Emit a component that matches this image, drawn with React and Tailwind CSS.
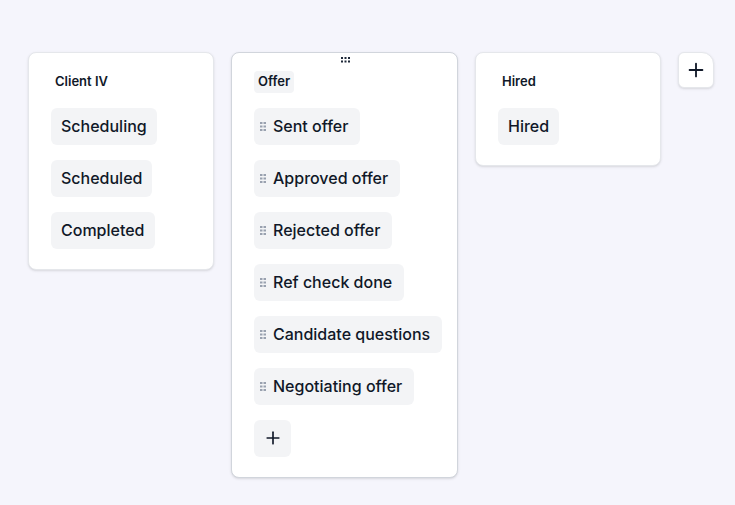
import { Plus } from "lucide-react";

function ChipHandle() {
  return (
    <svg width="6" height="9" viewBox="0 0 6 9" className="shrink-0 text-gray-400">
      {[0, 3.5, 7].map((y) =>
        [0, 3.5].map((x) => <rect key={`${x}-${y}`} x={x} y={y} width="2.5" height="2" fill="currentColor" />)
      )}
    </svg>
  );
}

function Chip({ label, handle }) {
  return (
    <div
      className={`h-[37px] inline-flex items-center rounded-md bg-gray-100 text-[16px] font-medium text-gray-900 ${
        handle ? "pl-[6px] pr-[12px] gap-[7px]" : "px-[10px]"
      }`}
    >
      {handle && <ChipHandle />}
      <span>{label}</span>
    </div>
  );
}

function Column({ title, items, width, handle, active }) {
  return (
    <div
      className={`relative bg-white rounded-lg border shadow-sm pt-[15px] pb-[20px] pl-[22px] pr-3 ${width} ${
        active ? "border-gray-300" : "border-gray-200"
      }`}
    >
      {active && (
        <svg width="9" height="6" viewBox="0 0 9 6" className="absolute top-[4px] left-[109px] text-gray-800">
          {[0, 3.5, 7].map((x) =>
            [0, 3.5].map((y) => <rect key={`${x}-${y}`} x={x} y={y} width="2" height="2" fill="currentColor" />)
          )}
        </svg>
      )}
      <div
        className={`h-[22px] inline-flex items-center px-1 rounded text-[13px] font-semibold text-gray-900 ${
          active ? "bg-gray-100" : ""
        }`}
      >
        {title}
      </div>
      <div className="mt-[15px] flex flex-col items-start gap-[15px]">
        {items.map((it) => (
          <Chip key={it} label={it} handle={handle} />
        ))}
        {active && (
          <div className="w-[37px] h-[37px] flex items-center justify-center rounded-md bg-gray-100 text-gray-900">
            <Plus size={20} strokeWidth={2} />
          </div>
        )}
      </div>
    </div>
  );
}

export default function App() {
  return (
    <div
      className="min-h-screen w-full bg-[#f5f5fc] pt-[52px] pl-[28px]"
      style={{ fontFamily: "Inter, 'Noto Sans', sans-serif" }}
    >
      <div className="flex items-start gap-[17px]">
        <Column title="Client IV" width="w-[186px]" items={["Scheduling", "Scheduled", "Completed"]} />
        <Column
          title="Offer"
          width="w-[227px]"
          handle
          active
          items={[
            "Sent offer",
            "Approved offer",
            "Rejected offer",
            "Ref check done",
            "Candidate questions",
            "Negotiating offer",
          ]}
        />
        <Column title="Hired" width="w-[186px]" items={["Hired"]} />
        <button className="w-9 h-9 flex items-center justify-center bg-white border border-gray-200 rounded-md rounded-tr-xl shadow-sm text-gray-900">
          <Plus size={22} strokeWidth={2} />
        </button>
      </div>
    </div>
  );
}
